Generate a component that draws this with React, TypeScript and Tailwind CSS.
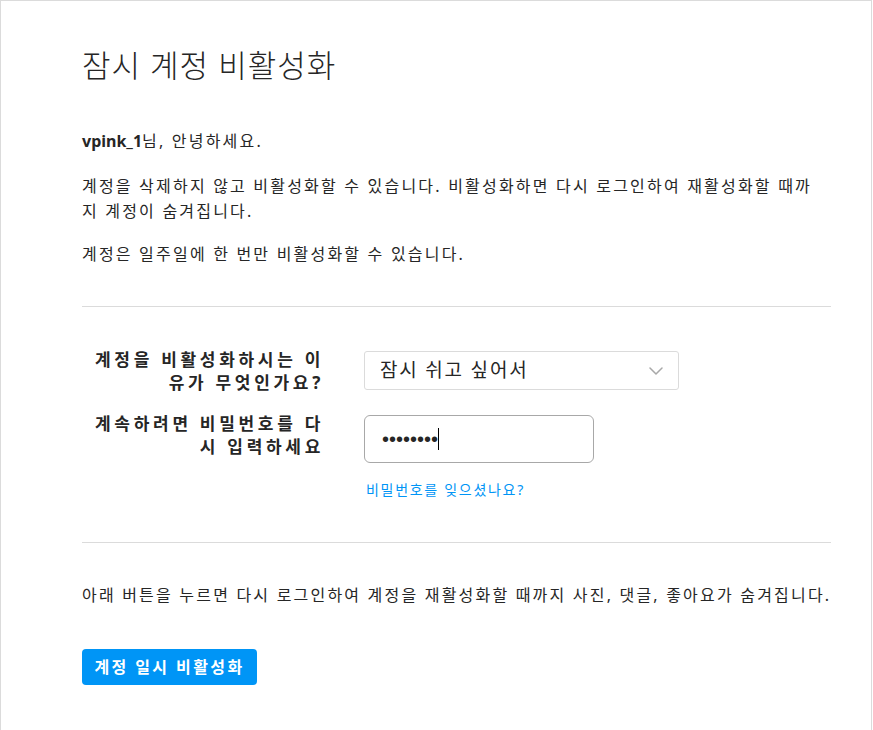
import React, { useState } from "react";

const FONT = "font-['Noto_Sans','Noto_Sans_CJK_KR',sans-serif]";

const ChevronDown = () => (
  <svg width="14" height="8" viewBox="0 0 14 8" fill="none">
    <path d="M1 1l6 6 6-6" stroke="#a8a8a8" strokeWidth="1.5" strokeLinecap="round" strokeLinejoin="round" />
  </svg>
);

const App = () => {
  const [reason, setReason] = useState("break");

  return (
    <div className={`${FONT} bg-white text-[#262626]`}>
      <div className="w-[872px] min-h-[760px] border border-[#dbdbdb] pt-[48px] pb-[60px] pl-[81px] pr-[40px]">
        <h1 className="text-[31px] leading-[32px] font-light tracking-[1px]">잠시 계정 비활성화</h1>

        <p className="mt-[48px] text-[16px] leading-[25px] tracking-[2.2px]">
          <span className="font-bold tracking-normal">vpink_1</span>님, 안녕하세요.
        </p>
        <p className="mt-[20px] text-[16px] leading-[25px] tracking-[2.2px] max-w-[740px]">
          계정을 삭제하지 않고 비활성화할 수 있습니다. 비활성화하면 다시 로그인하여 재활성화할 때까지 계정이 숨겨집니다.
        </p>
        <p className="mt-[18px] text-[16px] leading-[25px] tracking-[2.2px]">
          계정은 일주일에 한 번만 비활성화할 수 있습니다.
        </p>

        <div className="mt-[39px] h-px bg-[#dbdbdb]" />

        <form className="mt-[41px]" onSubmit={(e) => e.preventDefault()}>
          <div className="flex items-start">
            <label className="ml-[6px] w-[236px] mr-[40px] text-right text-[17px] leading-[23px] font-bold tracking-[3.7px]">
              계정을 비활성화하시는 이유가 무엇인가요?
            </label>
            <div className="relative mt-[3px] w-[315px]">
              <select
                value={reason}
                onChange={(e) => setReason(e.target.value)}
                className="appearance-none w-full h-[39px] border border-[#dbdbdb] rounded-[3px] bg-white pl-[15px] pr-[40px] text-[19px] tracking-[1.8px] text-[#262626] outline-none"
              >
                <option value="break">잠시 쉬고 싶어서</option>
                <option value="busy">너무 바빠서</option>
                <option value="other">기타</option>
              </select>
              <span className="pointer-events-none absolute right-[16px] top-[16px]">
                <ChevronDown />
              </span>
            </div>
          </div>

          <div className="mt-[18px] flex items-start">
            <label className="ml-[6px] w-[236px] mr-[40px] text-right text-[17px] leading-[23px] font-bold tracking-[3.7px]">
              계속하려면 비밀번호를 다시 입력하세요
            </label>
            <div className="mt-[3px]">
              <div className="w-[230px] h-[48px] border border-[#a8a8a8] rounded-[6px] flex items-center pl-[17px]">
                <span className="font-['Liberation_Sans',sans-serif] text-[20px] leading-none">••••••••</span>
                <span className="w-px h-[22px] bg-black" />
              </div>
              <a href="#" className="block mt-[18px] ml-[2px] text-[14px] leading-[18px] tracking-[1.7px] text-[#0095f6]">
                비밀번호를 잊으셨나요?
              </a>
            </div>
          </div>
        </form>

        <div className="mt-[43px] h-px bg-[#dbdbdb]" />

        <p className="mt-[40px] text-[16px] leading-[25px] tracking-[2.2px] whitespace-nowrap">
          아래 버튼을 누르면 다시 로그인하여 계정을 재활성화할 때까지 사진, 댓글, 좋아요가 숨겨집니다.
        </p>

        <button
          type="button"
          className="mt-[41px] h-[36px] w-[175px] rounded-[4px] bg-[#0095f6] text-white text-[16px] font-bold tracking-[2.4px]"
        >
          계정 일시 비활성화
        </button>
      </div>
    </div>
  );
};

export default App;
